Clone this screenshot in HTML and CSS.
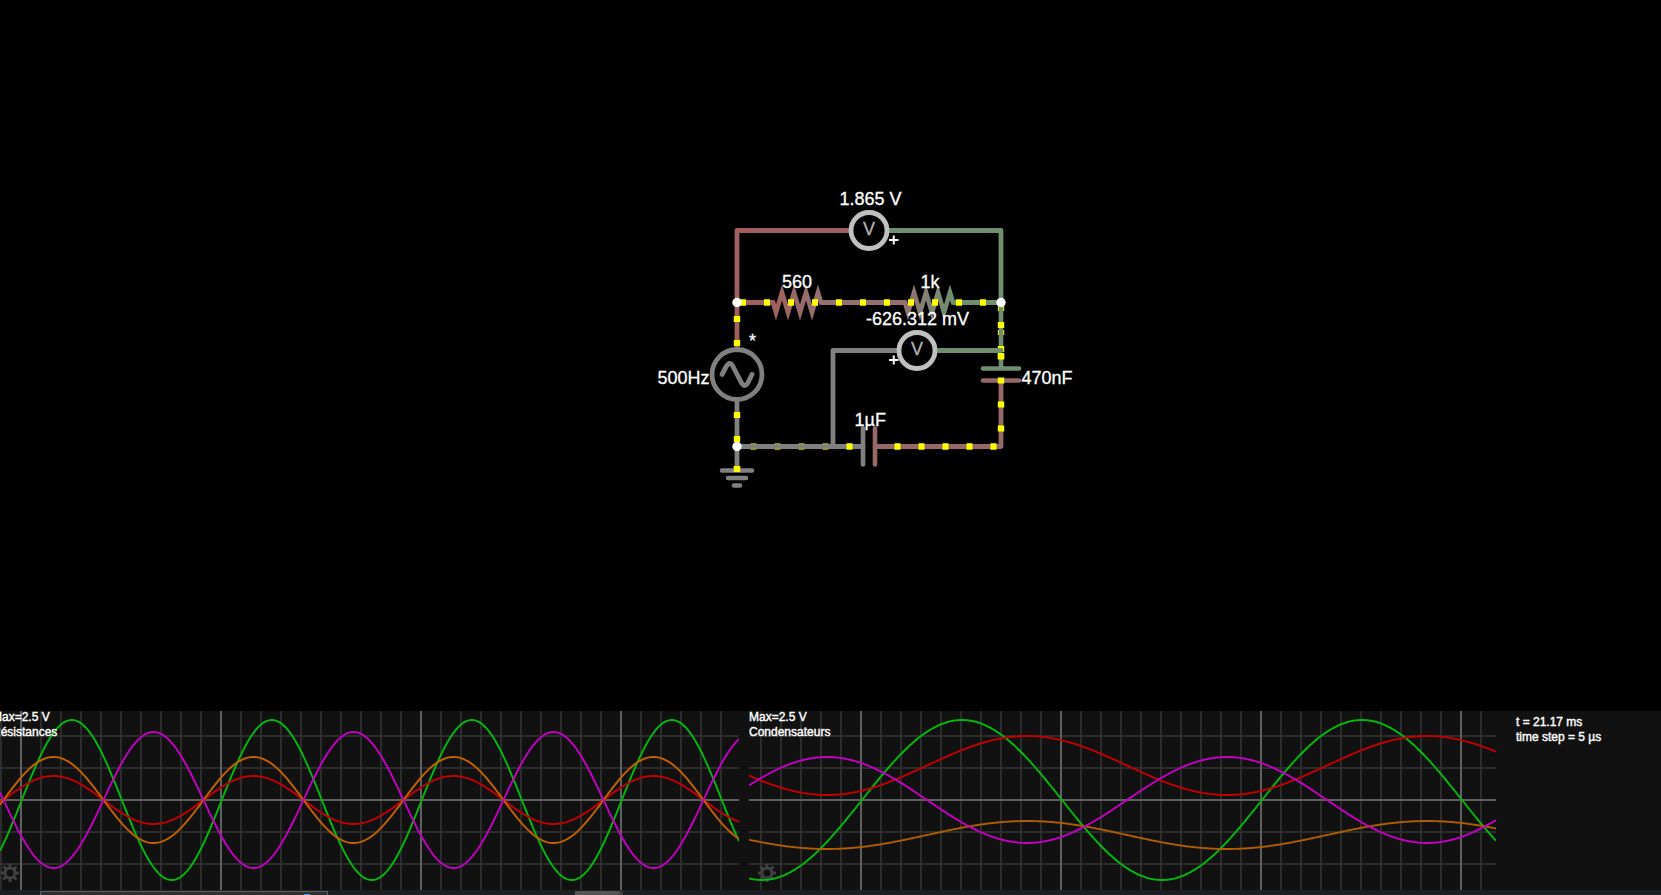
FILE: index.html
```html
<!DOCTYPE html>
<html lang="fr">
<head>
<meta charset="utf-8">
<title>Circuit Simulator</title>
<link rel="stylesheet" href="styles.css">
</head>
<body>
<main class="app">
  <svg class="circuit" viewBox="0 0 1661 711" width="1661" height="711">
    <defs>
      <linearGradient id="r1" gradientUnits="userSpaceOnUse" x1="772" y1="0" x2="822" y2="0"><stop offset="0" stop-color="#a06060"/><stop offset="1" stop-color="#947070"/></linearGradient>
      <linearGradient id="r2" gradientUnits="userSpaceOnUse" x1="905" y1="0" x2="955" y2="0"><stop offset="0" stop-color="#947070"/><stop offset=".6" stop-color="#7b8674"/><stop offset="1" stop-color="#6f8f6f"/></linearGradient>
    </defs>
    <g class="wire">
      <path class="red" d="M737 350V230.5H850"/>
      <path class="green" d="M888 230.5H1001V302.5"/>
      <path class="red" d="M737 302.5H773"/>
      <path class="mauve" d="M822 302.5H905"/>
      <path class="green" d="M954 302.5H1001"/>
      <path class="gray" d="M737 401V470M737 446.5H863M833 446.5V350.5H898"/>
      <path class="rose" d="M875 446.5H1001V380.5"/>
    </g>
    <path class="resistor" stroke="url(#r1)" d="M770 302.5H773L776 312.5L782 292.5L788 312.5L794 292.5L800 312.5L806 292.5L812 312.5L818 292.5L821 302.5H824"/>
    <path class="resistor" stroke="url(#r2)" d="M902 302.5H905L908 312.5L914 292.5L920 312.5L926 292.5L932 312.5L938 292.5L944 312.5L950 292.5L953 302.5H956"/>
    <g class="dots">
      <path d="M740 302.5h6m18 0h6m18 0h6m18 0h6m18 0h6m18 0h6m18 0h6m18 0h6m18 0h6m18 0h6m18 0h6"/>
      <path d="M737 316v6m0 18v6M737 412v6m0 18v6m0 24v6"/>
      <path d="M846.5 446.5h6m42 0h6m18 0h6m18 0h6m18 0h6m18 0h6"/>
      <path class="dim" d="M750.5 446.5h6m18 0h6m18 0h6m18 0h6"/>
      <path d="M1001 306v5m0 11v6m0 2v5m0 11v6m0 1v6"/>
    </g>
    <g class="wire">
      <path class="green" d="M938 350.5H1001"/>
      <path class="green thin" d="M1001 302V322M1001 328V346M1001 359V368"/>
      <path class="gray thin" d="M740 446.5H833"/>
      <path class="green plate" d="M983 368.5H1019"/>
      <path class="rose plate" d="M983 380.5H1019"/>
      <path class="gray plate" d="M863 428.5V464.5"/>
      <path class="rose plate" d="M875 428.5V464.5"/>
      <path class="gray plate" d="M722 470.5H752M728 478H746M734 485.5H740"/>
      <circle class="gray" cx="737" cy="374.5" r="25"/>
      <path class="gray" d="M722 374.5L726 367Q728 363.5 729.5 363.5Q731.5 363.5 733 366.5L741 382Q743 385.5 744.5 385.5Q746.5 385.5 748 382.5L752 374.5"/>
      <circle class="light" cx="869" cy="230.5" r="18"/>
      <circle class="light" cx="917" cy="350.5" r="18"/>
    </g>
    <g class="dots"><path d="M1001 353.5v6m0 18v6m0 18v6m0 18v6M737 466v6"/></g>
    <g class="post"><circle cx="737" cy="302.5" r="4.7"/><circle cx="1001" cy="302.5" r="4.7"/><circle cx="737" cy="446.5" r="4.7"/></g>
    <g class="label">
      <text x="839.5" y="205">1.865 V</text><text x="782" y="288">560</text>
      <text x="920.5" y="288">1k</text><text x="866" y="325">-626.312 mV</text>
      <text x="657.5" y="384">500Hz</text><text x="1021.5" y="384">470nF</text>
      <text x="854.5" y="426">1µF</text><text x="749" y="347">*</text>
      <text class="meter" x="863" y="235">V</text><text class="meter" x="911" y="355">V</text>
    </g>
    <path class="plus" d="M889 240h9.5m-4.75-4.5v9M889 360h9.5m-4.75-4.5v9"/>
  </svg>
  <section class="scopes">
    <div class="scope"><svg id="left" viewBox="0 711 739 179" width="739" height="179"></svg><div class="caption first">Max=2.5 V<br>Résistances</div></div>
    <div class="scope"><svg id="right" viewBox="749 711 747 179" width="747" height="179"></svg><div class="caption">Max=2.5 V<br>Condensateurs</div></div>
    <div class="info">t = 21.17 ms<br>time step = 5 µs</div>
  </section>
  <footer class="taskbar"><span class="search"><i class="accent"></i></span><span class="task"></span><span class="edge"></span></footer>
</main>
<script src="scopes.js"></script>
</body>
</html>
```
FILE: styles.css
```css
body { margin: 0; background: #000; color: #fff; overflow: hidden; font-family: "Liberation Sans", Arial, sans-serif; }
.app { display: flex; flex-direction: column; width: 1661px; height: 895px; }
.circuit { display: block; flex: none; }
.wire { fill: none; stroke-width: 4.8; stroke-linecap: round; stroke-linejoin: round; }
.red { stroke: #a06060; }
.rose { stroke: #966868; }
.mauve { stroke: #947070; }
.green { stroke: #6f8f6f; }
.gray { stroke: #808080; }
.light { stroke: #c0c0c0; }
.plate { stroke-width: 4.6; }
.thin { stroke-width: 4.6; stroke-linecap: butt; }
.resistor { fill: none; stroke-width: 4.6; stroke-linejoin: miter; stroke-miterlimit: 20; }
.dots { fill: none; stroke: #ff0; stroke-width: 6.4; }
.dim { stroke: #c8c000; }
.post { fill: #fff; }
.label { fill: #fff; font-size: 18px; stroke: #fff; stroke-width: .3; }
.meter { fill: #b4b4b4; stroke: #b4b4b4; }
.plus { stroke: #fff; stroke-width: 2; fill: none; }
.scopes { display: flex; flex: none; gap: 10px; height: 179px; background: #111; overflow: hidden; }
.scope { display: grid; flex: none; overflow: hidden; }
.scope > * { grid-area: 1 / 1; }
.caption, .info { font-size: 12px; line-height: 15px; white-space: nowrap; -webkit-text-stroke: .4px #fff; }
.caption { z-index: 1; margin-top: -1px; }
.first { margin-left: -8px; }
.info { margin: 4px 0 0 10px; }
.minor { fill: none; stroke: #2c2c2c; stroke-width: 2; }
.major { fill: none; stroke: #606060; stroke-width: 2; }
.trace { fill: none; stroke-width: 1.9; }
.gear { fill: none; stroke: #404040; }
.taskbar { box-sizing: border-box; display: flex; height: 5px; padding-top: 1px; background: #1d2023; }
.search { box-sizing: border-box; width: 288px; margin-left: 40px; border: 1px solid #606060; border-bottom: 0; background: #303030; display: flex; justify-content: flex-end; align-items: flex-end; }
.accent { width: 6px; height: 1px; margin-right: 17px; background: #4a90ff; }
.task { width: 44px; margin-left: 247px; background: #555; }
.edge { width: 4px; background: #404040; }
```
FILE: scopes.js
```js
const NS = "http://www.w3.org/2000/svg";

function add(svg, cls, d, stroke) {
  const p = document.createElementNS(NS, "path");
  p.setAttribute("class", cls);
  p.setAttribute("d", d);
  if (stroke) p.setAttribute("stroke", stroke);
  svg.appendChild(p);
  return p;
}

function drawScope(id, x0, x1, firstLine, firstMajor, gearX, traces) {
  const svg = document.getElementById(id);
  let minor = "", major = `M${x0} 800H${x1}`;
  for (let x = firstLine; x < x1; x += 20) {
    if ((x - firstMajor) % 200 === 0) major += `M${x} 711V890`;
    else minor += `M${x} 711V890`;
  }
  for (const y of [736, 768, 832, 864]) minor += `M${x0} ${y}H${x1}`;
  add(svg, "minor", minor);
  add(svg, "major", major);

  const gear = add(svg, "gear", "M5 0A5 5 0 1 1 -5 0A5 5 0 1 1 5 0M6 0H9M-6 0H-9M0 6V9M0 -6V-9M4.3 4.3L6.5 6.5M-4.3 -4.3L-6.5 -6.5M4.3 -4.3L6.5 -6.5M-4.3 4.3L-6.5 6.5");
  gear.setAttribute("transform", `translate(${gearX} 873)`);
  gear.setAttribute("stroke-width", "3");

  for (const [color, center, amp, peak, period] of traces) {
    let d = "";
    for (let x = x0; x <= x1; x++) {
      const y = center - amp * Math.cos(2 * Math.PI * (x - peak) / period);
      d += (d ? "L" : "M") + x + " " + y.toFixed(2);
    }
    add(svg, "trace", d, color);
  }
}

drawScope("left", 0, 739, 1, 21, 10, [
  ["#00bc0c", 800, 80, 71.8, 200],
  ["#c40000", 800, 24, 53.5, 200],
  ["#c46200", 800, 43, 53.5, 200],
  ["#c400c4", 800, 68, 153.5, 200]
]);
drawScope("right", 749, 1496, 761, 861, 767, [
  ["#00bc0c", 800, 80, 962, 400],
  ["#c40000", 765.5, 29.5, 1027, 400],
  ["#b05c00", 835, 14, 1027, 400],
  ["#c400c4", 800, 43, 827, 400]
]);
```
